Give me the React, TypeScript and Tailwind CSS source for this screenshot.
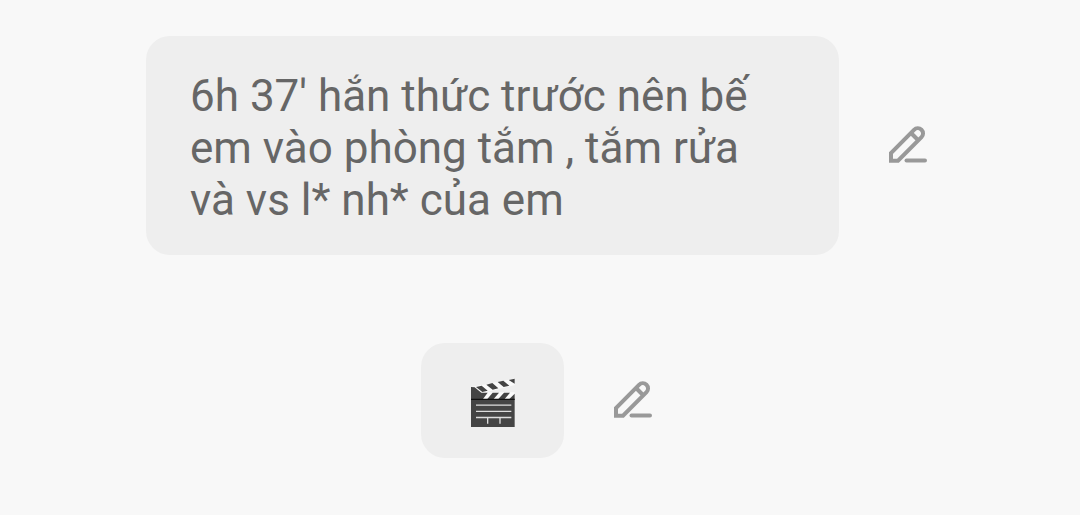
import type { ReactNode } from "react";

interface MessageRowProps {
  children: ReactNode;
}

function PencilIcon() {
  return (
    <svg
      width="50"
      height="50"
      viewBox="0 1 50 50"
      fill="none"
      stroke="currentColor"
      strokeWidth="4"
      strokeLinejoin="miter"
      aria-hidden="true"
    >
      <path d="M7 40.700V33L30 9.800A5.250 5.250 0 0 1 37.500 17.200L14 40.700Z" />
      <path d="M27 13L34 20" />
      <path d="M22.500 40.500H41" strokeLinecap="round" />
    </svg>
  );
}

function ClapperIcon() {
  return (
    <svg width="55" height="52" viewBox="15 21 165 156" role="img" aria-label="Clapper board">
      {/* upper arm */}
      <path fill="#fafafa" d="M34 51L164 26V45L80 66L60 70Z" />
      <path
        fill="#444"
        d="M48 51L65 47L83 62L67 66ZM79 44L97 39L115 55L98 59ZM113 36L130 32L148 47L131 51ZM146 30L164 26V41Z"
      />
      {/* lower arm */}
      <path fill="#fafafa" d="M34 67H164V87H34Z" />
      <path
        fill="#444"
        d="M33 51L44 52L64 68H83L69 87H33ZM98 68H117L101 87H82ZM132 68H150L134 87H115ZM164 71V87H148Z"
      />
      {/* slate */}
      <path fill="#444" d="M33 87H164V171H33Z" />
      <path fill="#111" d="M33 86H164V90H33Z" />
      <path
        fill="none"
        stroke="#ddd"
        strokeWidth="4"
        d="M48 105.500H154M48 124H154M48 142.500H154M83 142V161M120 142V161"
      />
    </svg>
  );
}

function MessageRow({ children }: MessageRowProps) {
  return (
    <div className="flex max-w-full items-center justify-center">
      <div className="max-w-[693px] rounded-3xl bg-[#eeeeee] px-11 pt-[34px] pb-[29px] text-[44px] leading-[52px] text-[#666666]">
        {children}
      </div>
      <button type="button" aria-label="Edit message" className="ml-[45px] shrink-0 cursor-pointer text-[#999999]">
        <PencilIcon />
      </button>
    </div>
  );
}

export default function App() {
  return (
    <main className="flex min-h-screen flex-col items-center gap-[88px] bg-[#f8f8f8] pt-9 font-['Roboto',sans-serif]">
      <MessageRow>
        <p className="w-[605px] max-w-full">
          6h 37' hắn thức trước nên bế
          <br />
          em vào phòng tắm , tắm rửa
          <br />
          và vs l* nh* của em
        </p>
      </MessageRow>
      <MessageRow>
        <ClapperIcon />
      </MessageRow>
    </main>
  );
}
